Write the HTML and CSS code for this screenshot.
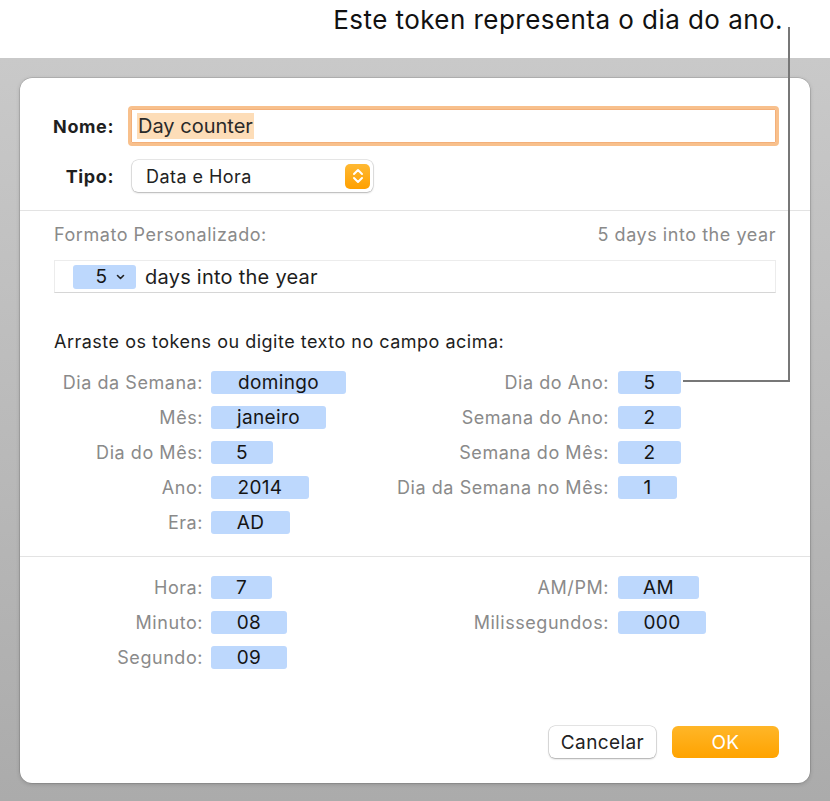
FILE: index.html
```html
<!DOCTYPE html>
<html lang="pt">
<head>
<meta charset="utf-8">
<title>Formato Personalizado</title>
<link rel="stylesheet" href="styles.css">
</head>
<body>
<div class="screen">
  <div class="caption"><span class="caption-text">Este token representa o dia do ano.</span></div>
  <div class="desk">
    <div class="dialog">
      <div class="head">
        <div class="row name-row">
          <span class="lbl-bold">Nome:</span>
          <div class="name-input"><span class="sel">Day counter</span></div>
        </div>
        <div class="row type-row">
          <span class="lbl-bold">Tipo:</span>
          <div class="popup">
            <span class="popup-text">Data e Hora</span>
            <span class="stepper">
              <svg width="14" height="20" viewBox="0 0 14 20"><path d="M3 8 L7 4 L11 8 M3 12 L7 16 L11 12" fill="none" stroke="#fff" stroke-width="2" stroke-linecap="round" stroke-linejoin="round"/></svg>
            </span>
          </div>
        </div>
      </div>

      <div class="section format">
        <div class="format-head">
          <span class="muted">Formato Personalizado:</span>
          <span class="muted">5 days into the year</span>
        </div>
        <div class="token-field">
          <span class="token chev-token">5<svg class="chev" width="9" height="6" viewBox="0 0 9 6"><path d="M1.5 1.5 L4.5 4.5 L7.5 1.5" fill="none" stroke="#222" stroke-width="1.6" stroke-linecap="round" stroke-linejoin="round"/></svg></span>
          <span class="tf-text">days into the year</span>
        </div>
        <p class="hint">Arraste os tokens ou digite texto no campo acima:</p>
        <div class="grid">
          <span class="lbl">Dia da Semana:</span><span class="token w135">domingo</span>
          <span class="lbl">Dia do Ano:</span><span class="token w63">5</span>

          <span class="lbl">Mês:</span><span class="token w115">janeiro</span>
          <span class="lbl">Semana do Ano:</span><span class="token w63">2</span>

          <span class="lbl">Dia do Mês:</span><span class="token w62">5</span>
          <span class="lbl">Semana do Mês:</span><span class="token w63">2</span>

          <span class="lbl">Ano:</span><span class="token w98">2014</span>
          <span class="lbl">Dia da Semana no Mês:</span><span class="token w58">1</span>

          <span class="lbl">Era:</span><span class="token w79">AD</span>
          <span></span><span></span>
        </div>
      </div>

      <div class="section time">
        <div class="grid">
          <span class="lbl">Hora:</span><span class="token w61">7</span>
          <span class="lbl">AM/PM:</span><span class="token w81">AM</span>

          <span class="lbl">Minuto:</span><span class="token w76">08</span>
          <span class="lbl">Milissegundos:</span><span class="token w88">000</span>

          <span class="lbl">Segundo:</span><span class="token w76">09</span>
          <span></span><span></span>
        </div>
      </div>

      <div class="buttons">
        <button class="btn cancel">Cancelar</button>
        <button class="btn ok">OK</button>
      </div>
    </div>
  </div>
  <div class="leader-v"></div>
  <div class="leader-h"></div>
</div>
</body>
</html>
```

FILE: styles.css
```css
* { box-sizing: border-box; }
html, body { margin: 0; padding: 0; }
body {
  font-family: Inter, "Liberation Sans", sans-serif;
  color: #1d1d1d;
  background: #fff;
}
.screen {
  position: relative;
  width: 830px;
  height: 801px;
  overflow: hidden;
}
.caption {
  height: 58px;
  display: flex;
  justify-content: flex-end;
  align-items: flex-start;
  padding: 5px 47px 0 0;
}
.caption-text {
  font-size: 26px;
  line-height: 30px;
  color: #111;
  letter-spacing: 0.45px;
}
.desk {
  height: 743px;
  padding: 20px 20px 18px 20px;
  background: linear-gradient(#c9c9c9, #ababab);
}
.dialog {
  width: 790px;
  height: 705px;
  background: #fff;
  border-radius: 12px;
  box-shadow: 0 0 0 0.5px rgba(0,0,0,0.18), 0 1px 4px rgba(0,0,0,0.18);
  display: flex;
  flex-direction: column;
}
.head {
  padding: 28px 31px 18px 0;
  border-bottom: 1px solid #e3e3e3;
  display: flex;
  flex-direction: column;
  gap: 14px;
}
.row {
  display: flex;
  align-items: center;
}
.lbl-bold {
  width: 94px;
  text-align: right;
  font-weight: 700;
  font-size: 18px;
  letter-spacing: 0.6px;
  color: #1f1f1f;
}
.name-input {
  margin-left: 14px;
  flex: 1;
  height: 40px;
  border: 3px solid #f8c08c;
  border-radius: 4px;
  display: flex;
  align-items: center;
  padding-left: 6px;
  box-shadow: inset 0 0 0 1px #f3b07a;
}
.sel {
  background: #fdddb8;
  font-size: 20px;
  line-height: 26px;
  padding: 0 1px;
  color: #2a2a2a;
}
.popup {
  margin-left: 18px;
  width: 241px;
  height: 32px;
  border-radius: 6px;
  background: #fff;
  box-shadow: 0 0 0 0.5px rgba(0,0,0,0.18), 0 1px 2px rgba(0,0,0,0.22);
  display: flex;
  align-items: center;
  justify-content: space-between;
  padding: 0 3px 0 14px;
}
.popup-text {
  font-size: 18px;
  letter-spacing: 0.45px;
  color: #222;
}
.stepper {
  width: 25px;
  height: 25px;
  border-radius: 5px;
  background: linear-gradient(#ffb933, #ffa000);
  display: flex;
  align-items: center;
  justify-content: center;
}
.section {
  padding-left: 34px;
  padding-right: 34px;
}
.format {
  padding-top: 12px;
  padding-bottom: 16px;
  border-bottom: 1px solid #e3e3e3;
}
.format-head {
  display: flex;
  justify-content: space-between;
  line-height: 24px;
  font-size: 18px;
  letter-spacing: 0.55px;
}
.muted { color: #8a8a8a; }
.token-field {
  margin-top: 13px;
  height: 33px;
  border: 1px solid #ececec;
  border-bottom-color: #d6d6d6;
  display: flex;
  align-items: center;
  padding-left: 18px;
  gap: 9px;
}
.tf-text {
  font-size: 20px;
  letter-spacing: 0.25px;
  color: #1d1d1d;
}
.token {
  display: inline-flex;
  align-items: center;
  justify-content: center;
  height: 23px;
  border-radius: 3px;
  background: #bdd8fd;
  font-size: 19px;
  letter-spacing: 0.35px;
  color: #151515;
  justify-self: start;
}
.chev-token {
  width: 63px;
  height: 24px;
  padding-left: 12px;
  gap: 9px;
}
.chev { display: block; }
.hint {
  margin: 37px 0 11px 0;
  font-size: 18px;
  letter-spacing: 0.5px;
  line-height: 24px;
  color: #1d1d1d;
}
.grid {
  display: grid;
  grid-template-columns: 149px 140px 250px auto;
  grid-auto-rows: 35px;
  column-gap: 8px;
  align-items: center;
}
.grid > span:nth-child(4n+3) { margin-left: 1px; }
.grid > span:nth-child(4n) { margin-left: 1px; }
.lbl {
  text-align: right;
  font-size: 18px;
  letter-spacing: 0.55px;
  color: #8a8a8a;
  white-space: nowrap;
}
.time {
  padding-top: 13px;
}
.w58 { width: 59px; }
.w61 { width: 61px; }
.w62 { width: 62px; }
.w63 { width: 63px; }
.w76 { width: 76px; }
.w79 { width: 79px; }
.w81 { width: 81px; }
.w88 { width: 88px; }
.w98 { width: 98px; }
.w115 { width: 115px; }
.w135 { width: 135px; }
.buttons {
  margin-top: auto;
  padding: 0 31px 25px 0;
  display: flex;
  justify-content: flex-end;
  gap: 16px;
}
.btn {
  font-family: Inter, "Liberation Sans", sans-serif;
  height: 32px;
  width: 107px;
  border: none;
  border-radius: 6px;
  font-size: 19px;
  letter-spacing: 0.4px;
}
.cancel {
  background: #fff;
  color: #222;
  box-shadow: 0 0 0 0.5px rgba(0,0,0,0.2), 0 1px 2px rgba(0,0,0,0.25);
}
.ok {
  background: linear-gradient(#ffb628, #ffa300);
  color: #fff;
}
.leader-v {
  position: absolute;
  left: 788px;
  top: 27px;
  width: 2px;
  height: 355px;
  background: #777;
}
.leader-h {
  position: absolute;
  left: 683px;
  top: 380px;
  width: 107px;
  height: 2px;
  background: #777;
}
```
